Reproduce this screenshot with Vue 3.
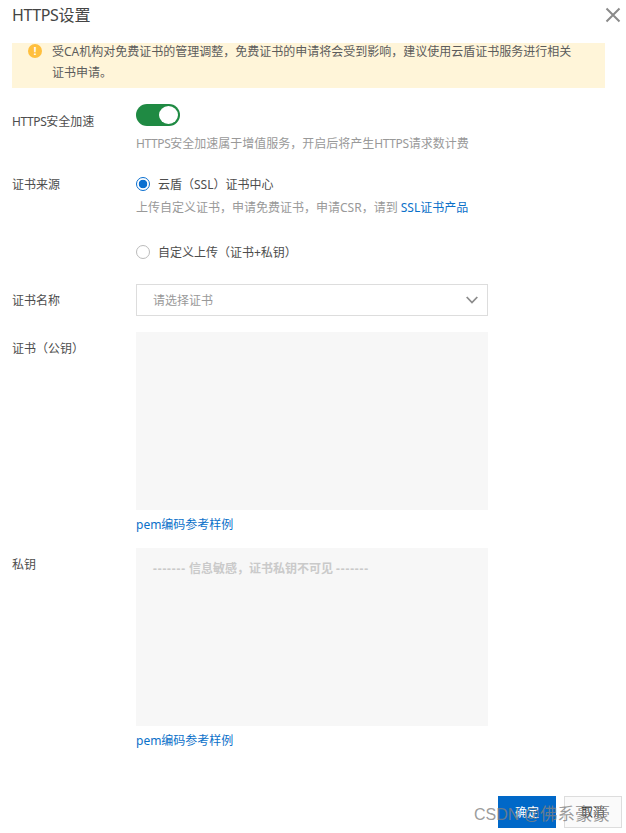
<template>
  <div class="dialog">
    <header class="head">
      <span class="title"><span class="latin">HTTPS</span>设置</span>
      <svg class="close" width="16" height="16" viewBox="0 0 16 16"><path d="M1.5 1.5 14.5 14.5M14.5 1.5 1.5 14.5" stroke="#8a8a8a" stroke-width="2" fill="none"/></svg>
    </header>
    <div class="alert">
      <span class="alert-icon">!</span>
      <p>受CA机构对免费证书的管理调整，免费证书的申请将会受到影响，建议使用云盾证书服务进行相关证书申请。</p>
    </div>
    <section class="row switch-row">
      <label><span class="latin">HTTPS</span>安全加速</label>
      <div class="body">
        <div class="switch"><span class="knob"></span></div>
        <p class="hint hint-switch"><span class="latin">HTTPS</span>安全加速属于增值服务，开启后将产生<span class="latin">HTTPS</span>请求数计费</p>
      </div>
    </section>
    <section class="row source-row">
      <label>证书来源</label>
      <div class="body">
        <div class="radio"><span class="dot on"></span>云盾（SSL）证书中心</div>
        <p class="hint hint-source">上传自定义证书，申请免费证书，申请CSR，请到 <a>SSL证书产品</a></p>
        <div class="radio second"><span class="dot"></span>自定义上传（证书+私钥）</div>
      </div>
    </section>
    <section class="row name-row">
      <label>证书名称</label>
      <div class="body">
        <div class="select">
          <span>请选择证书</span>
          <svg width="12" height="8" viewBox="0 0 12 8"><path d="M.7 1 6 6.5 11.3 1" stroke="#8c8c8c" stroke-width="1.8" fill="none"/></svg>
        </div>
      </div>
    </section>
    <section class="row cert-row">
      <label>证书（公钥）</label>
      <div class="body">
        <div class="box"></div>
        <a class="sample">pem编码参考样例</a>
      </div>
    </section>
    <section class="row key-row">
      <label>私钥</label>
      <div class="body">
        <div class="box sensitive"><span class="dash">-------</span> 信息敏感，证书私钥不可见 <span class="dash">-------</span></div>
        <a class="sample">pem编码参考样例</a>
      </div>
    </section>
    <footer class="foot">
      <button class="ok">确定</button>
      <button class="cancel">取消</button>
    </footer>
    <span class="mark">CSDN @<span class="mark-cjk">佛系豪豪</span></span>
  </div>
</template>

<script setup>
</script>

<style>
html, body { background: #fff; }
</style>

<style scoped>
.dialog {
  position: relative;
  width: 626px;
  height: 833px;
  overflow: hidden;
  box-sizing: border-box;
  padding: 0 21px 0 12px;
  font-family: "Noto Sans", "Noto Sans CJK SC", sans-serif;
  font-size: 12px;
  color: #333;
  background: #fff;
}
.latin { letter-spacing: -.4px; }
.head { height: 43px; display: flex; justify-content: space-between; align-items: flex-start; }
.title { font-size: 16px; line-height: 30px; color: #444; }
.close { margin: 7px -16px 0 0; }
.alert {
  height: 45px; box-sizing: border-box; padding: 0 0 0 16px;
  display: flex; gap: 10px; background: #fff5d9;
}
.alert p { margin: -2px 0 0; width: 520px; line-height: 21px; color: #5c5c5c; }
.alert-icon {
  width: 14px; height: 14px; margin-top: 1px; border-radius: 50%; background: #ffbf3d; color: #fff;
  font: bold 11px/14px "Liberation Sans", sans-serif; text-align: center; flex: none;
}
.row { display: flex; }
.row label { width: 124px; flex: none; line-height: 18px; color: #4d4d4d; }
.body { flex: 1; min-width: 0; }
.switch-row { margin-top: 16px; height: 71px; }
.switch-row label { padding-top: 9px; }
.switch {
  width: 44px; height: 22px; border-radius: 11px; background: #1f8a43; position: relative;
}
.knob {
  position: absolute; right: 2px; top: 2px; width: 19px; height: 18px; border-radius: 50%; background: #fff;
}
.hint { margin: 0; color: #999; line-height: 18px; }
.hint-switch { margin-top: 9px; }
.source-row { height: 109px; }
.source-row label { padding-top: 1px; }
.radio { display: flex; align-items: center; gap: 8px; height: 18px; color: #4d4d4d; }
.dot { width: 14px; height: 14px; box-sizing: border-box; border: 1px solid #bbb; border-radius: 50%; flex: none; }
.dot.on { border-color: #0a6fd0; background: radial-gradient(circle, #0a6fd0 0 4px, #fff 4.6px); }
.hint-source { margin-top: 6px; }
.hint a { color: #0a70c9; }
.second { margin-top: 26px; }
.name-row { height: 48px; }
.name-row label { padding-top: 8px; }
.select {
  width: 352px; height: 32px; box-sizing: border-box; border: 1px solid #ddd; padding: 0 9px 0 16px;
  display: flex; justify-content: space-between; align-items: center; color: #999;
}
.cert-row { height: 216px; }
.key-row { height: 216px; }
.cert-row label, .key-row label { padding-top: 8px; }
.box {
  width: 352px; height: 178px; box-sizing: border-box; background: #f7f7f7; color: #c4c4c4; padding: 12px 17px; line-height: 18px;
}
.sensitive { font-weight: 700; color: #cacaca; }
.dash { letter-spacing: .85px; }
.sample { display: block; margin-top: 6px; line-height: 18px; color: #0a70c9; }
.foot { position: absolute; left: 498px; top: 796px; display: flex; gap: 8px; }
.foot button { width: 58px; height: 32px; font: inherit; padding: 0; }
.ok { background: #0068c8; color: #fff; border: 0; }
.cancel { background: #fafafa; color: #333; border: 1px solid #ddd; }
.mark {
  position: absolute; left: 474px; top: 803px; font-size: 16px; line-height: 22px; color: rgba(130,130,130,.8); white-space: nowrap;
  font-family: "Liberation Sans", "Noto Sans CJK SC", sans-serif;
}
.mark-cjk { font-size: 17.5px; }
</style>
